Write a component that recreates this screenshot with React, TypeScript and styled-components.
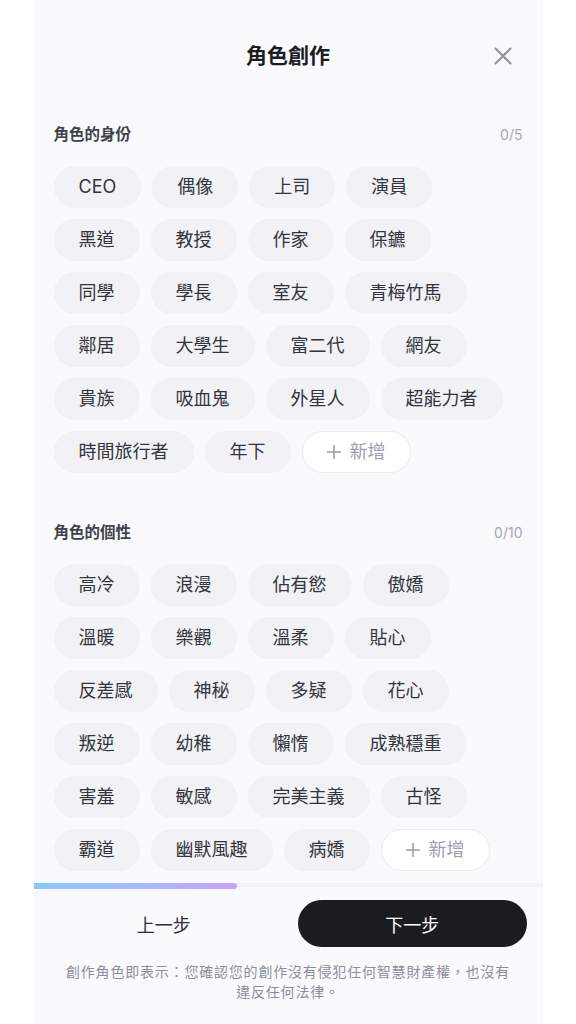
import React from 'react';
import styled, { createGlobalStyle } from 'styled-components';

const FONT = `Inter, "Noto Sans CJK TC", "Noto Sans", sans-serif`;

const GlobalStyle = createGlobalStyle`
  html, body {
    margin: 0;
    padding: 0;
    background: #ffffff;
  }
  body {
    font-family: ${FONT};
    -webkit-font-smoothing: antialiased;
  }
  * {
    box-sizing: border-box;
  }
`;

const identities = [
  'CEO', '偶像', '上司', '演員',
  '黑道', '教授', '作家', '保鑣',
  '同學', '學長', '室友', '青梅竹馬',
  '鄰居', '大學生', '富二代', '網友',
  '貴族', '吸血鬼', '外星人', '超能力者',
  '時間旅行者', '年下',
];

const personalities = [
  '高冷', '浪漫', '佔有慾', '傲嬌',
  '溫暖', '樂觀', '溫柔', '貼心',
  '反差感', '神秘', '多疑', '花心',
  '叛逆', '幼稚', '懶惰', '成熟穩重',
  '害羞', '敏感', '完美主義', '古怪',
  '霸道', '幽默風趣', '病嬌',
];

const Sheet = styled.div`
  width: 509px;
  height: 100vh;
  margin: 0 auto;
  background: #fafafc;
  display: flex;
  flex-direction: column;
`;

const Header = styled.header`
  display: grid;
  grid-template-columns: 1fr auto 1fr;
  align-items: center;
  height: 40px;
  margin-top: 36px;
  padding: 0 20px;
`;

const Title = styled.h1`
  grid-column: 2;
  margin: 0;
  font-size: 21px;
  line-height: 28px;
  font-weight: 700;
  color: #1c1d22;
`;

const CloseButton = styled.button`
  grid-column: 3;
  justify-self: end;
  width: 40px;
  height: 40px;
  border: 0;
  padding: 0;
  background: transparent;
  display: flex;
  align-items: center;
  justify-content: center;
  cursor: pointer;
`;

const Body = styled.main`
  flex: 1;
  min-height: 0;
  overflow-y: auto;
  scrollbar-width: none;
  padding: 48px 20px 10px;
  &::-webkit-scrollbar {
    display: none;
  }
`;

const Section = styled.section`
  & + & {
    margin-top: 49px;
  }
`;

const SectionHead = styled.div`
  display: flex;
  align-items: center;
  justify-content: space-between;
  height: 22px;
  margin-bottom: 20px;
`;

const SectionLabel = styled.h2`
  margin: 0;
  font-size: 15.5px;
  line-height: 22px;
  font-weight: 700;
  color: #40424a;
`;

const Counter = styled.span`
  font-size: 14px;
  line-height: 22px;
  color: #a4a7b3;
`;

const ChipGrid = styled.div`
  display: flex;
  flex-wrap: wrap;
  column-gap: 11px;
  row-gap: 11px;
`;

const Chip = styled.button<{ $add?: boolean }>`
  height: 42px;
  padding: 0 ${(p) => (p.$add ? 24 : 25)}px;
  border-radius: 21px;
  border: ${(p) => (p.$add ? '1px solid #ebebf0' : '0')};
  background: ${(p) => (p.$add ? '#ffffff' : '#f1f1f6')};
  color: ${(p) => (p.$add ? '#9c9fab' : '#33353c')};
  font-family: ${FONT};
  font-size: 18px;
  line-height: 24px;
  font-weight: 400;
  display: inline-flex;
  align-items: center;
  gap: 9px;
  white-space: nowrap;
  cursor: pointer;
`;

const Footer = styled.footer`
  flex-shrink: 0;
  padding-bottom: 22px;
`;

const Track = styled.div`
  height: 4px;
  margin-top: 1px;
  background: #eef3fb;
`;

const Fill = styled.div<{ $progress: number }>`
  width: ${(p) => p.$progress}%;
  height: 6px;
  margin-top: -1px;
  border-radius: 0 3px 3px 0;
  background: linear-gradient(90deg, #86c8ff 0%, #a9b7fd 55%, #c7a2fb 100%);
`;

const Actions = styled.div`
  display: grid;
  grid-template-columns: 1fr 1fr;
  gap: 20px;
  padding: 0 16px;
  margin-top: 13px;
`;

const ActionButton = styled.button<{ $primary?: boolean }>`
  height: 47px;
  border: 0;
  border-radius: 24px;
  background: ${(p) => (p.$primary ? '#1b1c20' : 'transparent')};
  color: ${(p) => (p.$primary ? '#ffffff' : '#2b2d33')};
  font-family: ${FONT};
  font-size: 18px;
  font-weight: 400;
  cursor: pointer;
`;

const Disclaimer = styled.p`
  margin: 15px 0 0;
  padding: 0 28px;
  text-align: center;
  font-size: 14px;
  line-height: 20px;
  letter-spacing: 0.8px;
  color: #8c8f9b;
`;

function CloseIcon() {
  return (
    <svg width="18" height="18" viewBox="0 0 18 18" fill="none">
      <path d="M1.5 1.5 16.5 16.5M16.5 1.5 1.5 16.5" stroke="#8b8f9c" strokeWidth="2" strokeLinecap="round" />
    </svg>
  );
}

function PlusIcon() {
  return (
    <svg width="14" height="14" viewBox="0 0 14 14" fill="none">
      <path d="M7 0v14M0 7h14" stroke="#9c9fab" strokeWidth="1.6" />
    </svg>
  );
}

interface TagSectionProps {
  label: string
  max: number
  tags: string[]
}

function TagSection({ label, max, tags }: TagSectionProps) {
  return (
    <Section>
      <SectionHead>
        <SectionLabel>{label}</SectionLabel>
        <Counter>0/{max}</Counter>
      </SectionHead>
      <ChipGrid>
        {tags.map((t) => (
          <Chip key={t}>{t}</Chip>
        ))}
        <Chip $add>
          <PlusIcon />
          新增
        </Chip>
      </ChipGrid>
    </Section>
  );
}

export default function App() {
  return (
    <>
      <GlobalStyle />
      <Sheet>
        <Header>
          <Title>角色創作</Title>
          <CloseButton aria-label="Close">
            <CloseIcon />
          </CloseButton>
        </Header>

        <Body>
          <TagSection label="角色的身份" max={5} tags={identities} />
          <TagSection label="角色的個性" max={10} tags={personalities} />
        </Body>

        <Footer>
          <Track>
            <Fill $progress={40} />
          </Track>
          <Actions>
            <ActionButton>上一步</ActionButton>
            <ActionButton $primary>下一步</ActionButton>
          </Actions>
          <Disclaimer>
            創作角色即表示：您確認您的創作沒有侵犯任何智慧財產權，也沒有違反任何法律。
          </Disclaimer>
        </Footer>
      </Sheet>
    </>
  );
}
